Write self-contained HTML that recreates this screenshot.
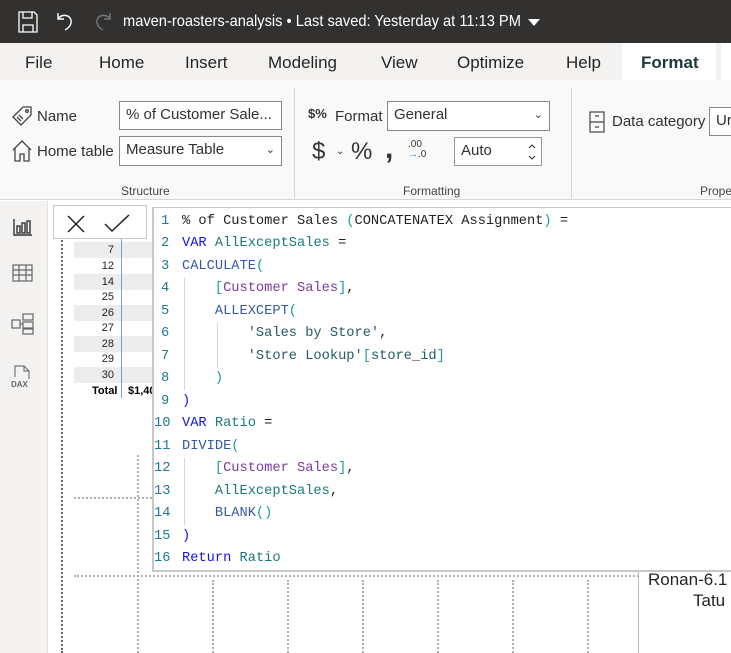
<!DOCTYPE html>
<html><head><meta charset="utf-8"><style>
*{margin:0;padding:0;box-sizing:border-box}
body{width:731px;height:653px;overflow:hidden;background:#fff;font-family:"Liberation Sans",sans-serif;position:relative}
.a{position:absolute}
.title{left:0;top:0;width:731px;height:43px;background:#323130;color:#fff}
.tabs{left:0;top:43px;width:731px;height:37px;background:#f3f2f1;font-size:17px;color:#252423}
.tabs span{position:absolute;top:10px}
.ribbon{left:0;top:80px;width:731px;height:120px;background:#f9f9f9;border-bottom:1px solid #d6d6d6;font-size:15px;color:#323130}
.box{position:absolute;background:#fff;border:1px solid #8a8886;font-size:15px;padding-left:6px;line-height:26px;color:#323130}
.side{left:0;top:201px;width:48px;height:452px;background:#f3f2f1;border-right:1px solid #e1dfdd}
.code{left:152px;top:207px;width:590px;height:365px;background:#fff;border-left:2px solid #c8c8c8;border-bottom:2px solid #c8c8c8;border-top:1px solid #c8c8c8;font-family:"Liberation Mono",monospace;font-size:13.7px}
.ln{position:absolute;left:7px;color:#237893}
.cl{position:absolute;left:28px;white-space:pre;color:#222}
.k{color:#1414e8}.v{color:#1b7878}.f{color:#3558a8}.m{color:#7b3a9c}.b{color:#1b9aa0}.s{color:#255a66}
.guide{position:absolute;width:1px;background:#d4d4d4}
.trow{position:absolute;left:74px;width:78px;height:16px;font-size:11px;color:#252423}
.trow i{position:absolute;right:38px;top:2px;font-style:normal}
.trow u{position:absolute;left:121px;top:2px;text-decoration:none;width:40px}
.dv{position:absolute;width:0;border-left:2px dotted #b0b0b0}
</style></head><body>
<div class="a title">
 <svg class="a" style="left:18px;top:11px" width="20" height="22" viewBox="0 0 20 22" fill="none" stroke="#fff" stroke-width="1.3"><path d="M1 1h15l3 3v17H1z"/><path d="M5 1v6h9V1"/><path d="M5 21v-7h10v7"/></svg>
 <svg class="a" style="left:56px;top:11px" width="20" height="20" viewBox="0 0 20 20" fill="none" stroke="#fff" stroke-width="1.4"><path d="M2 2v6h6"/><path d="M2 8c3-5 11-5 13 1 1 4-2 8-6 10"/></svg>
 <svg class="a" style="left:92px;top:11px" width="20" height="20" viewBox="0 0 20 20" fill="none" stroke="#777" stroke-width="1.4"><path d="M18 2v6h-6"/><path d="M18 8c-3-5-11-5-13 1-1 4 2 8 6 10"/></svg>
 <div class="a" style="left:123px;top:13px;font-size:16px;color:#fff;white-space:nowrap;transform:scaleX(0.915);transform-origin:left">maven-roasters-analysis • Last saved: Yesterday at 11:13 PM</div>
 <svg class="a" style="left:528px;top:19px" width="12" height="8"><path d="M0 0h12L6 7z" fill="#fff"/></svg>
</div>
<div class="a tabs">
 <span style="left:25px">File</span><span style="left:99px">Home</span><span style="left:185px">Insert</span><span style="left:268px">Modeling</span><span style="left:381px">View</span><span style="left:457px">Optimize</span><span style="left:566px">Help</span>
 <div class="a" style="left:622px;top:0;width:94px;height:37px;background:#fff"></div>
 <span style="left:641px;font-weight:bold;color:#1b3a3a">Format</span>
 <div class="a" style="left:721px;top:0;width:10px;height:37px;background:#fff"></div>
</div>
<div class="a ribbon">
 <svg class="a" style="left:11px;top:25px" width="22" height="22" viewBox="0 0 22 22" fill="none" stroke="#444" stroke-width="1.3"><path d="M12 2h8v8L10 20 2 12z"/><circle cx="16" cy="6" r="1.3"/><path d="M6 12l4 4M8 10l4 4"/></svg>
 <div class="a" style="left:37px;top:28px">Name</div>
 <div class="box" style="left:119px;top:21px;width:163px;height:29px">% of Customer Sale...</div>
 <svg class="a" style="left:11px;top:59px" width="22" height="24" viewBox="0 0 22 24" fill="none" stroke="#444" stroke-width="1.3"><path d="M2 11L11 2l9 9M4 9v13h5v-7h4v7h5V9"/></svg>
 <div class="a" style="left:37px;top:63px">Home table</div>
 <div class="box" style="left:119px;top:56px;width:163px;height:30px">Measure Table<span style="position:absolute;right:6px;top:0;font-size:11px">⌄</span></div>
 <div class="a" style="left:121px;top:104px;font-size:12px;color:#444">Structure</div>
 <div class="a" style="left:294px;top:8px;width:1px;height:110px;background:#d6d6d6"></div>
 <div class="a" style="left:308px;top:26px;font-size:13px;font-weight:bold;color:#333">$%</div>
 <div class="a" style="left:335px;top:28px">Format</div>
 <div class="box" style="left:387px;top:21px;width:163px;height:30px">General<span style="position:absolute;right:6px;top:0;font-size:11px">⌄</span></div>
 <div class="a" style="left:312px;top:58px;font-size:24px;color:#333">$</div>
 <div class="a" style="left:336px;top:66px;font-size:10px">⌄</div>
 <div class="a" style="left:351px;top:58px;font-size:24px;color:#333">%</div>
 <div class="a" style="left:385px;top:52px;font-size:30px;font-weight:bold;color:#333">,</div>
 <div class="a" style="left:408px;top:60px;font-size:10px;line-height:10px;color:#333">.00<br><span style="color:#2b7cd3">→</span>.0</div>
 <div class="box" style="left:454px;top:57px;width:88px;height:29px;border-color:#999">Auto
  <svg class="a" style="left:72px;top:5px" width="10" height="18" viewBox="0 0 10 18" fill="none" stroke="#333" stroke-width="1.1"><path d="M2 5l3-3 3 3M2 13l3 3 3-3"/></svg></div>
 <div class="a" style="left:403px;top:104px;font-size:12px;color:#444">Formatting</div>
 <div class="a" style="left:571px;top:8px;width:1px;height:110px;background:#d6d6d6"></div>
 <svg class="a" style="left:589px;top:31px" width="16" height="22" viewBox="0 0 16 22" fill="none" stroke="#444" stroke-width="1.2"><rect x="1" y="1" width="14" height="20"/><path d="M1 11h14M6 5h4M6 16h4"/></svg>
 <div class="a" style="left:612px;top:33px">Data category</div>
 <div class="box" style="left:709px;top:27px;width:40px;height:29px">Ur</div>
 <div class="a" style="left:700px;top:104px;font-size:12px;color:#444">Prope</div>
</div>
<div class="a side">
 <svg class="a" style="left:13px;top:17px" width="20" height="18" viewBox="0 0 20 18" fill="none" stroke="#333" stroke-width="1.4"><path d="M1 1v16h18"/><rect x="4" y="8" width="3" height="7"/><rect x="9" y="5" width="3" height="10"/><rect x="14" y="3" width="3" height="12"/></svg>
 <svg class="a" style="left:12px;top:63px" width="21" height="18" viewBox="0 0 21 18" fill="none" stroke="#666" stroke-width="1.2"><rect x="1" y="1" width="19" height="16"/><path d="M1 6h19M1 11h19M7 1v16M14 1v16"/></svg>
 <svg class="a" style="left:11px;top:112px" width="23" height="22" viewBox="0 0 23 22" fill="none" stroke="#666" stroke-width="1.2"><rect x="1" y="7" width="8" height="8"/><rect x="12" y="1" width="10" height="6"/><rect x="12" y="9" width="10" height="6"/><rect x="12" y="16" width="10" height="5"/><path d="M9 11h3"/></svg>
 <svg class="a" style="left:11px;top:164px" width="22" height="24" viewBox="0 0 22 24" fill="none" stroke="#777" stroke-width="1.2"><path d="M4 12V1h9l5 5v8M13 1v5h5"/><text x="0" y="22" font-size="8" font-family="Liberation Sans" fill="#666" stroke="none" font-weight="bold">DAX</text></svg>
</div>
<!-- canvas -->
<div class="a" style="left:61px;top:205px;width:0;height:448px;border-left:2px dotted #666"></div>
<div class="a" style="left:74px;top:497px;width:78px;border-top:2px dotted #b0b0b0"></div>
<div class="a" style="left:74px;top:575px;width:565px;border-top:2px dotted #b0b0b0"></div>
<div class="dv" style="left:137px;top:455px;height:198px"></div>
<div class="dv" style="left:212px;top:580px;height:73px"></div>
<div class="dv" style="left:287px;top:580px;height:73px"></div>
<div class="dv" style="left:362px;top:580px;height:73px"></div>
<div class="dv" style="left:437px;top:580px;height:73px"></div>
<div class="dv" style="left:512px;top:580px;height:73px"></div>
<div class="dv" style="left:587px;top:580px;height:73px"></div>
<div class="a" style="left:638px;top:571px;width:1px;height:82px;background:#bbb"></div>
<div class="a" style="left:648px;top:570px;font-size:17px;color:#252423;white-space:nowrap">Ronan-6.1</div>
<div class="a" style="left:693px;top:591px;font-size:17px;color:#252423">Tatu</div>
<!-- table -->
<div class="trow" style="top:242px;background:#ececec"><i>7</i><u>$</u></div>
<div class="trow" style="top:258px"><i>12</i><u>$2</u></div>
<div class="trow" style="top:274px;background:#ececec"><i>14</i><u>$</u></div>
<div class="trow" style="top:289px"><i>25</i><u>$</u></div>
<div class="trow" style="top:305px;background:#ececec"><i>26</i><u>$3</u></div>
<div class="trow" style="top:320px"><i>27</i><u>$1</u></div>
<div class="trow" style="top:336px;background:#ececec"><i>28</i><u>$1</u></div>
<div class="trow" style="top:351px"><i>29</i><u>$1</u></div>
<div class="trow" style="top:367px;background:#ececec"><i>30</i><u>$2</u></div>
<div class="a" style="left:92px;top:385px;font-size:11px;font-weight:bold">Total</div>
<div class="a" style="left:128px;top:385px;font-size:11px;font-weight:bold">$1,40</div>
<div class="a" style="left:121px;top:228px;width:1px;height:170px;background:#6aa6e6"></div>
<div class="a" style="left:53px;top:205px;width:94px;height:34px;background:#fff;border:1px solid #c8c8c8">
 <svg class="a" style="left:12px;top:8px" width="20" height="20" viewBox="0 0 20 20" stroke="#222" stroke-width="1.5"><path d="M2 2l16 16M18 2L2 18"/></svg>
 <svg class="a" style="left:50px;top:7px" width="26" height="20" viewBox="0 0 26 20" fill="none" stroke="#222" stroke-width="1.5"><path d="M1 11l7 7L25 2"/></svg>
</div>
<!-- code -->
<div class="a code">
 <div class="guide" style="left:30px;top:70px;height:112px"></div>
 <div class="guide" style="left:63px;top:115px;height:45px"></div>
 <div class="guide" style="left:30px;top:250px;height:67px"></div>
 <div class="ln" style="top:6px">1</div><div class="cl" style="top:6px">% of Customer Sales <span class="b">(</span>CONCATENATEX Assignment<span class="b">)</span> =</div>
 <div class="ln" style="top:28px">2</div><div class="cl" style="top:28px"><span class="k">VAR</span> <span class="v">AllExceptSales</span> =</div>
 <div class="ln" style="top:51px">3</div><div class="cl" style="top:51px"><span class="f">CALCULATE</span><span class="b">(</span></div>
 <div class="ln" style="top:73px">4</div><div class="cl" style="top:73px">    <span class="b">[</span><span class="m">Customer Sales</span><span class="b">]</span>,</div>
 <div class="ln" style="top:96px">5</div><div class="cl" style="top:96px">    <span class="f">ALLEXCEPT</span><span class="b">(</span></div>
 <div class="ln" style="top:118px">6</div><div class="cl" style="top:118px">        <span class="s">'Sales by Store'</span>,</div>
 <div class="ln" style="top:141px">7</div><div class="cl" style="top:141px">        <span class="s">'Store Lookup'</span><span class="b">[</span><span class="s">store_id</span><span class="b">]</span></div>
 <div class="ln" style="top:163px">8</div><div class="cl" style="top:163px">    <span class="b">)</span></div>
 <div class="ln" style="top:186px">9</div><div class="cl" style="top:186px"><span class="k">)</span></div>
 <div class="ln" style="top:208px;left:0">10</div><div class="cl" style="top:208px"><span class="k">VAR</span> <span class="v">Ratio</span> =</div>
 <div class="ln" style="top:231px;left:0">11</div><div class="cl" style="top:231px"><span class="f">DIVIDE</span><span class="b">(</span></div>
 <div class="ln" style="top:253px;left:0">12</div><div class="cl" style="top:253px">    <span class="b">[</span><span class="m">Customer Sales</span><span class="b">]</span>,</div>
 <div class="ln" style="top:276px;left:0">13</div><div class="cl" style="top:276px">    <span class="v">AllExceptSales</span>,</div>
 <div class="ln" style="top:298px;left:0">14</div><div class="cl" style="top:298px">    <span class="f">BLANK</span><span class="b">()</span></div>
 <div class="ln" style="top:321px;left:0">15</div><div class="cl" style="top:321px"><span class="k">)</span></div>
 <div class="ln" style="top:343px;left:0">16</div><div class="cl" style="top:343px"><span class="k">Return</span> <span class="v">Ratio</span></div>
</div>
</body></html>
